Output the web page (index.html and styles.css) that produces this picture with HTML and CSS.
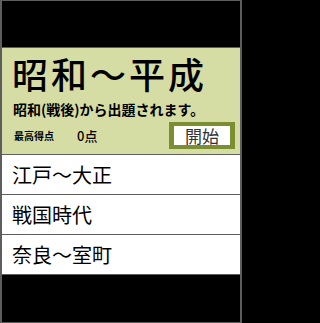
FILE: index.html
```html
<!DOCTYPE html>
<html lang="ja">
<head>
<meta charset="utf-8">
<title>クイズ</title>
<link rel="stylesheet" href="styles.css">
</head>
<body>
<div class="frame">
  <div class="header"></div>
  <div class="panel">
    <div class="title">昭和〜平成</div>
    <div class="desc">昭和(戦後)から出題されます。</div>
    <div class="scorebar">
      <div class="score"><span class="score-label">最高得点</span><span class="score-value">0点</span></div>
      <div class="start">開始</div>
    </div>
  </div>
  <div class="list">
    <div class="item">江戸〜大正</div>
    <div class="item">戦国時代</div>
    <div class="item">奈良〜室町</div>
  </div>
  <div class="footer"></div>
</div>
</body>
</html>
```
FILE: styles.css
```css
html, body {
  margin: 0;
  padding: 0;
  background: #000;
}
.frame {
  width: 242px;
  height: 323px;
  box-sizing: border-box;
  border: 2px solid #5e5e5e;
  border-top-width: 1px;
  border-bottom-width: 1px;
  background: #000;
  display: flex;
  flex-direction: column;
  font-family: "Noto Sans CJK JP", sans-serif;
  color: #000;
}
.header {
  height: 46px;
  background: #000;
  border-bottom: 1px solid #5e5e5e;
}
.panel {
  height: 107px;
  box-sizing: border-box;
  background: #d5dda5;
  border-bottom: 1px solid #5e5e5e;
  padding: 0 5px 6px 10px;
  display: flex;
  flex-direction: column;
}
.title {
  margin-top: -1px;
  font-size: 36px;
  line-height: 52px;
  height: 52px;
  font-weight: 500;
  letter-spacing: 3px;
}
.desc {
  font-size: 14px;
  line-height: 20px;
  height: 20px;
  font-weight: 700;
  margin-left: 1px;
}
.scorebar {
  margin-top: 3px;
  display: flex;
  align-items: center;
  justify-content: space-between;
}
.score {
  display: flex;
  align-items: center;
  margin-left: 2px;
}
.score-label {
  font-size: 10px;
  font-weight: 700;
  line-height: 14px;
}
.score-value {
  font-size: 13px;
  line-height: 19px;
  font-weight: 500;
  margin-left: 23px;
}
.start {
  width: 66px;
  height: 27px;
  box-sizing: border-box;
  border: 4px solid #7b8f32;
  border-left-width: 5px;
  border-right-width: 5px;
  background: #fff;
  color: #333;
  font-size: 17px;
  line-height: 19px;
  text-align: center;
}
.list {
  display: flex;
  flex-direction: column;
  background: #fff;
}
.item {
  height: 40px;
  box-sizing: border-box;
  border-bottom: 1px solid #5e5e5e;
  padding-left: 10px;
  font-size: 20px;
  line-height: 39px;
  background: #fff;
}
.footer {
  flex: 1;
  background: #000;
}
```
